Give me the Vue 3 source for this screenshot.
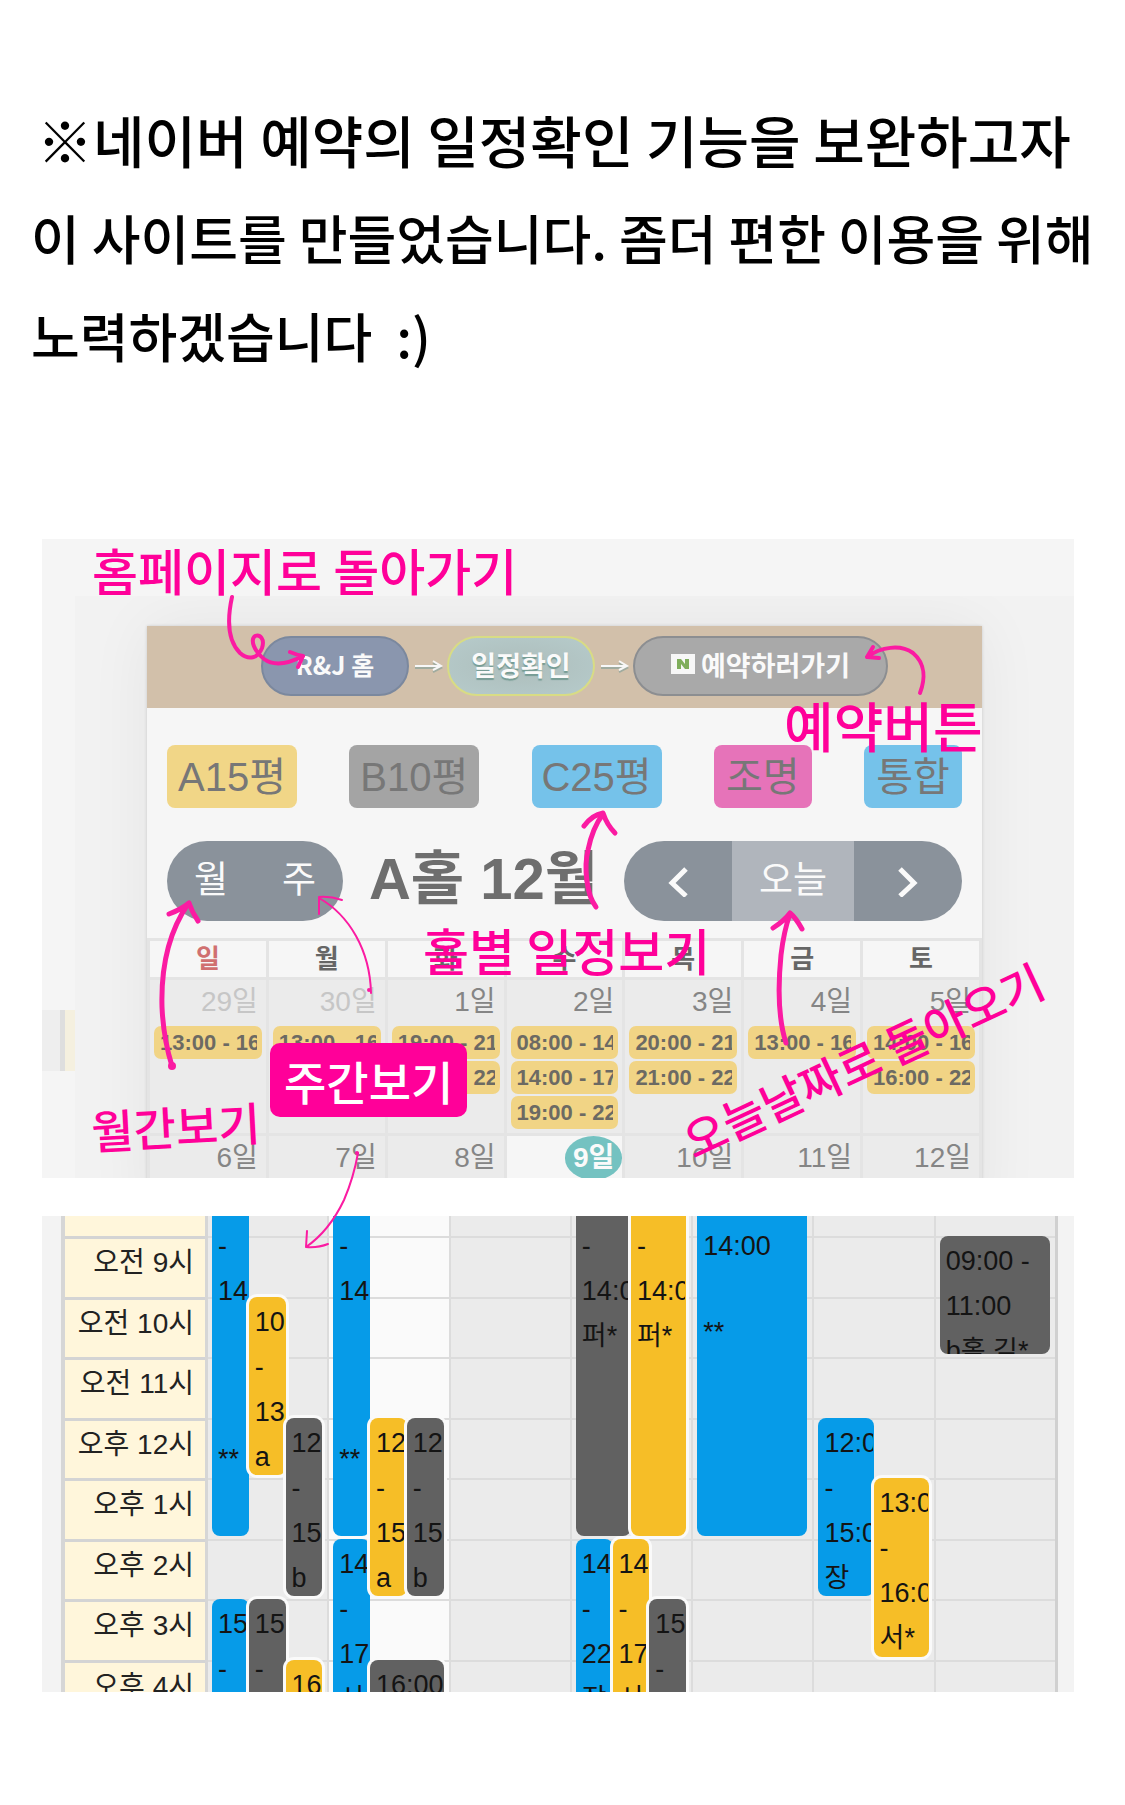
<script setup>
const halls = [
  { name: 'A15평', tone: 'amber', wide: true },
  { name: 'B10평', tone: 'gray', wide: true },
  { name: 'C25평', tone: 'sky', wide: true },
  { name: '조명', tone: 'pink', wide: false },
  { name: '통합', tone: 'sky', wide: false },
]

const weekdays = ['일', '월', '화', '수', '목', '금', '토']

const weeks = [
  [
    { day: 29, faded: true, slots: ['13:00 - 16:00'] },
    { day: 30, faded: true, slots: ['13:00 - 16:00'] },
    { day: 1, slots: ['19:00 - 21:00', '20:00 - 22:00'] },
    { day: 2, slots: ['08:00 - 14:00', '14:00 - 17:00', '19:00 - 22:00'] },
    { day: 3, slots: ['20:00 - 21:00', '21:00 - 22:00'] },
    { day: 4, slots: ['13:00 - 16:00'] },
    { day: 5, slots: ['14:00 - 16:00', '16:00 - 22:00'] },
  ],
  [
    { day: 6, slots: [] },
    { day: 7, slots: [] },
    { day: 8, slots: [] },
    { day: 9, today: true, slots: [] },
    { day: 10, slots: [] },
    { day: 11, slots: [] },
    { day: 12, slots: [] },
  ],
]

const firstHour = 8
const hours = ['오전 8시', '오전 9시', '오전 10시', '오전 11시', '오후 12시', '오후 1시', '오후 2시', '오후 3시', '오후 4시']

const days = [
  {
    events: [
      { from: 8, to: 14, lane: 0, lanes: 3, tone: 'blue', lines: ['08', '-', '14', '', '', '', '**'] },
      { from: 10, to: 13, lane: 1, lanes: 3, tone: 'gold', lines: ['10', '-', '13', 'a'] },
      { from: 12, to: 15, lane: 2, lanes: 3, tone: 'dark', lines: ['12', '-', '15', 'b'] },
      { from: 15, to: 18, lane: 0, lanes: 3, tone: 'blue', lines: ['15', '-'] },
      { from: 15, to: 18, lane: 1, lanes: 3, tone: 'dark', lines: ['15', '-'] },
      { from: 16, to: 18, lane: 2, lanes: 3, tone: 'gold', lines: ['16', '-'] },
    ],
  },
  {
    today: true,
    events: [
      { from: 8, to: 14, lane: 0, lanes: 3, tone: 'blue', lines: ['08', '-', '14', '', '', '', '**'] },
      { from: 14, to: 18, lane: 0, lanes: 3, tone: 'blue', lines: ['14', '-', '17', '서'] },
      { from: 12, to: 15, lane: 1, lanes: 3, tone: 'gold', lines: ['12', '-', '15', 'a'] },
      { from: 12, to: 15, lane: 2, lanes: 3, tone: 'dark', lines: ['12', '-', '15', 'b'] },
      { from: 16, to: 18, lane: 1, lanes: 3, span: 2, tone: 'dark', lines: ['16:00', '-'] },
    ],
  },
  { events: [] },
  {
    events: [
      { from: 8, to: 14, lane: 0, lanes: 2, tone: 'dark', lines: ['08:00', '-', '14:00', '퍼*'] },
      { from: 8, to: 14, lane: 1, lanes: 2, tone: 'gold', lines: ['08:00', '-', '14:00', '퍼*'] },
      { from: 14, to: 22, lane: 0, lanes: 3, tone: 'blue', lines: ['14', '-', '22', '장'] },
      { from: 14, to: 17, lane: 1, lanes: 3, tone: 'gold', lines: ['14', '-', '17', '서'] },
      { from: 15, to: 18, lane: 2, lanes: 3, tone: 'dark', lines: ['15', '-'] },
    ],
  },
  { events: [{ from: 8, to: 14, lane: 0, lanes: 1, tone: 'blue', lines: ['08:00 -', '14:00', '', '**'] }] },
  {
    events: [
      { from: 12, to: 15, lane: 0, lanes: 2, tone: 'blue', lines: ['12:00', '-', '15:00', '장'] },
      { from: 13, to: 16, lane: 1, lanes: 2, tone: 'gold', lines: ['13:00', '-', '16:00', '서*'] },
    ],
  },
  { events: [{ from: 9, to: 11, lane: 0, lanes: 1, tone: 'dark', lines: ['09:00 -', '11:00', 'b홀 김*'] }] },
]

const place = (e) => ({
  top: `${((e.from - firstHour) / hours.length) * 100}%`,
  height: `calc(${((e.to - e.from) / hours.length) * 100}% - 3px)`,
  left: `${(e.lane / e.lanes) * 100}%`,
  width: `${((e.span || 1) / e.lanes) * 100}%`,
})
</script>

<template>
  <main class="page">
    <p class="intro">
      <span class="lead">※네이버 예약의 일정확인 기능을 보완하고자</span>
      <span>이 사이트를 만들었습니다. 좀더 편한 이용을 위해</span>
      <span>노력하겠습니다&nbsp; :)</span>
    </p>

    <div class="guide">
      <section class="month-panel">
        <div class="gutter"><div class="peek"></div></div>
        <div class="backdrop">
          <div class="card">
            <nav class="steps">
              <a href="#" class="step home">R&amp;J 홈</a>
              <svg class="arrow" viewBox="0 0 38 16"><path class="shade" d="M6 10H31M24 5l8 5l-8 4" /><path d="M6 8H31M24 3l8 5l-8 4" /></svg>
              <a href="#" class="step check">일정확인</a>
              <svg class="arrow" viewBox="0 0 38 16"><path class="shade" d="M6 10H31M24 5l8 5l-8 4" /><path d="M6 8H31M24 3l8 5l-8 4" /></svg>
              <a href="#" class="step book">
                <svg class="naver" viewBox="0 0 24 20"><rect width="24" height="20" fill="#f7f7f7" /><path d="M6 5h4l4 5V5h4v10h-4l-4-5v5H6z" fill="#7fae5c" /></svg>
                예약하러가기
              </a>
            </nav>

            <div class="halls">
              <button v-for="h in halls" :key="h.name" type="button" class="hall" :class="[h.tone, { wide: h.wide }]">{{ h.name }}</button>
            </div>

            <div class="toolbar">
              <div class="group views">
                <button type="button">월</button>
                <button type="button">주</button>
              </div>
              <h1>A홀 12월</h1>
              <div class="group pager">
                <button type="button" aria-label="이전"><svg viewBox="0 0 24 32"><path d="M20 4L6 18L20 31" /></svg></button>
                <button type="button" class="now">오늘</button>
                <button type="button" aria-label="다음"><svg viewBox="0 0 24 32"><path d="M4 4L18 18L4 31" /></svg></button>
              </div>
            </div>

            <table class="month">
              <thead>
                <tr><th v-for="(w, i) in weekdays" :key="w" :class="{ sunday: i === 0 }">{{ w }}</th></tr>
              </thead>
              <tbody>
                <tr v-for="(week, i) in weeks" :key="i">
                  <td v-for="d in week" :key="d.day" :class="{ faded: d.faded, today: d.today }">
                    <div class="date"><span>{{ d.day }}일</span></div>
                    <div v-for="s in d.slots" :key="s" class="slot"><span>{{ s }}</span></div>
                  </td>
                </tr>
              </tbody>
            </table>
          </div>
        </div>
      </section>

      <section class="week-panel">
        <div class="week">
          <div class="hours">
            <div v-for="h in hours" :key="h" class="hour">{{ h }}</div>
          </div>
          <div v-for="(d, i) in days" :key="i" class="day" :class="{ today: d.today }">
            <div v-for="h in hours" :key="h" class="cell"></div>
            <div class="lanes">
              <div v-for="(e, j) in d.events" :key="j" class="event" :class="[e.tone, { ring: e.lane > 0 }]" :style="place(e)">
                <div class="clip"><div v-for="(l, k) in e.lines" :key="k" class="line">{{ l }}</div></div>
              </div>
            </div>
          </div>
        </div>
      </section>

      <svg class="arrows" viewBox="42 539 1032 1153" preserveAspectRatio="none">
        <g class="bold">
          <path d="M188 904C166 936 161 972 162 1007C163 1030 167 1050 172 1066M169 914Q182 909 189 903Q192 912 198 921" />
          <path d="M596 907C586 894 584 866 588 850C591 835 597 822 603 814M584 826Q592 815 603 813Q607 825 615 833" />
          <path d="M786 1043C778 1018 778 985 781 955C783 938 786 925 790 914M773 928Q784 921 790 913Q796 918 802 929" />
        </g>
        <g class="medium">
          <path d="M232 597C227 620 228 641 240 653C249 661 258 658 262 648C265 639 260 634 255 636C250 640 254 651 264 659C272 665 284 666 303 656M290 652Q297 655 303 656L298 667" />
          <path d="M920 693C925 680 926 664 913 653C900 644 881 647 867 657M873 647L867 657L879 658" />
        </g>
        <g class="thin">
          <path d="M371 993C370 950 349 915 319 898M342 900Q330 896 319 897V914" />
          <path d="M358 1153C355 1170 350 1186 344 1200C334 1221 322 1236 306 1247M307 1231L306 1247Q318 1248 328 1244" />
        </g>
        <circle cx="172" cy="1066" r="4" />
        <circle cx="369" cy="990" r="2" />
        <circle cx="357" cy="1153" r="2" />
      </svg>

      <span class="note go-home">홈페이지로 돌아가기</span>
      <span class="note reserve">예약버튼</span>
      <span class="note by-hall">홀별 일정보기</span>
      <span class="note monthly">월간보기</span>
      <span class="note weekly">주간보기</span>
      <span class="note back-today">오늘날짜로 돌아오기</span>
    </div>
  </main>
</template>

<style>
body {
  margin: 0;
  background: #fff;
}
</style>

<style scoped>
.page {
  padding: 90px 51px 113px 42px;
  font-family: "Liberation Sans", "Noto Sans CJK KR", sans-serif;
  box-sizing: border-box;
}
button {
  font: inherit;
  border: 0;
  padding: 0;
}
.intro {
  margin: 0 -51px 155px -11px;
  font-family: "Noto Sans CJK KR", sans-serif;
  font-size: 53px;
  font-weight: 500;
  line-height: 98px;
  color: #000;
  white-space: nowrap;
}
.intro span {
  display: block;
}
.intro .lead {
  padding-left: 6px;
  font-size: 56px;
}
.guide {
  position: relative;
  display: flex;
  flex-direction: column;
  gap: 38px;
}

.month-panel {
  display: flex;
  height: 639px;
  overflow: hidden;
  background: #f5f5f5;
}
.gutter {
  flex: 0 0 33px;
  padding-top: 471px;
}
.peek {
  height: 61px;
  box-sizing: border-box;
  background: linear-gradient(90deg, #eee 18px, #dedede 18px, #dedede 23px, #f5f0df 23px);
}
.backdrop {
  flex: 1;
  min-width: 0;
  margin-top: 57px;
  padding: 30px 92px 0 72px;
  background: #f2f2f2;
  overflow: hidden;
}
.card {
  height: 600px;
  background: #f6f6f6;
  box-shadow: 0 0 3px rgba(0, 0, 0, 0.15), 0 0 60px rgba(0, 0, 0, 0.06);
}
.steps {
  display: flex;
  align-items: center;
  justify-content: center;
  box-sizing: border-box;
  height: 82px;
  padding: 0 0 2px 20px;
  background: #d2c0aa;
}
.step {
  display: flex;
  align-items: center;
  justify-content: center;
  gap: 6px;
  box-sizing: border-box;
  width: 148px;
  height: 60px;
  padding-bottom: 4px;
  border: 2px solid;
  border-radius: 30px;
  font-family: "Noto Sans CJK KR", sans-serif;
  font-size: 27px;
  font-weight: 700;
  color: #fafafa;
  text-decoration: none;
  white-space: nowrap;
}
.home {
  background: #8a96ae;
  border-color: #7b889e;
  font-size: 25px;
}
.check {
  background: radial-gradient(#adbdbb, #b6cbcb);
  border-color: #d8dc84;
  text-shadow: 0 2px 1px #769c94;
}
.book {
  width: 255px;
  background: #a9a9a9;
  border-color: #8c8e91;
}
.arrow {
  width: 38px;
  height: 16px;
  fill: none;
  stroke: #f7f7f7;
  stroke-width: 2;
}
.arrow .shade {
  stroke: #a0ab9f;
}
.naver {
  width: 24px;
  height: 20px;
}
.halls {
  display: flex;
  justify-content: space-between;
  padding: 37px 20px 33px;
}
.hall {
  width: 98px;
  height: 63px;
  border-radius: 8px;
  font-size: 40px;
  line-height: 65px;
  color: #777;
  white-space: nowrap;
}
.hall.wide {
  width: 130px;
}
.amber {
  background: #f1d687;
}
.gray {
  background: #a4a4a4;
}
.sky {
  background: #75c2ea;
}
.pink {
  background: #e673b9;
}
.toolbar {
  display: flex;
  align-items: center;
  justify-content: space-between;
  height: 80px;
  padding: 0 20px;
}
.group {
  display: flex;
  height: 80px;
  border-radius: 40px;
  overflow: hidden;
  background: #8a929b;
}
.group button {
  display: flex;
  align-items: center;
  justify-content: center;
  width: 108px;
  background: none;
  color: #fafafa;
  font-size: 37px;
  line-height: 40px;
}
.views button {
  width: 88px;
}
.group .now {
  width: 122px;
  background: #b0b5bc;
}
.group svg {
  width: 24px;
  height: 32px;
  fill: none;
  stroke: #fafafa;
  stroke-width: 5;
}
h1 {
  margin: 0;
  font-size: 58px;
  line-height: 76px;
  height: 80px;
  font-weight: 700;
  color: #6e6e6e;
  white-space: nowrap;
}
.month {
  width: 100%;
  margin-top: 17px;
  table-layout: fixed;
  border-collapse: collapse;
}
.month th,
.month td {
  border: 3px solid #e4e4e4;
  padding: 0;
}
.month th {
  height: 34px;
  font-size: 26px;
  line-height: 36px;
  color: #666;
}
.month th.sunday {
  color: #d07070;
}
.month td {
  height: 153px;
  vertical-align: top;
  background: #ebebeb;
}
.month td.today {
  background: #f6f6f6;
}
.date {
  height: 46px;
  display: flex;
  justify-content: flex-end;
  align-items: flex-start;
  color: #858585;
  font-size: 28px;
  line-height: 44px;
}
.date span {
  padding: 0 8px;
}
.faded .date {
  color: #c6c6c6;
}
.today .date span {
  background: #74c2c1;
  border-radius: 50%;
  color: #fafafa;
  font-weight: 700;
}
.slot {
  height: 33px;
  margin: 0 4px 2px;
  padding: 0 5px 0 6px;
  border-radius: 7px;
  background: #f1d485;
  font-size: 22px;
  line-height: 33px;
  font-weight: 700;
  color: #6c6a63;
}
.slot span {
  display: block;
  overflow: hidden;
  white-space: nowrap;
}

.week-panel {
  height: 476px;
  overflow: hidden;
  padding: 0 16px 0 19px;
  background: #f3f3f3;
}
.week {
  display: flex;
  height: 544px;
  margin-top: -40px;
  border-left: 4px solid #d6d6d6;
  border-right: 3px solid #d0d0d0;
}
.hours {
  display: flex;
  flex-direction: column;
  flex: 0 0 140px;
  border-right: 3px solid #d6d6d6;
  background: #fff6db;
}
.hour {
  flex: 1;
  box-sizing: border-box;
  padding-right: 11px;
  border-top: 3px solid #d4d4d4;
  text-align: right;
  font-size: 28px;
  line-height: 48px;
  color: #222;
  min-height: 0;
}
.day {
  position: relative;
  display: flex;
  flex-direction: column;
  flex: 1;
  box-sizing: border-box;
  min-width: 0;
  background: #ebebeb;
  border-right: 2px solid #dcdcdc;
}
.day:last-child {
  border-right: 0;
}
.day.today {
  background: #fafafa;
}
.cell {
  flex: 1;
  border-top: 2px solid #dcdcdc;
}
.lanes {
  position: absolute;
  inset: 0 5px 0 4px;
}
.event {
  position: absolute;
  box-sizing: border-box;
  padding: 3px 1px 0 6px;
  border-radius: 8px;
  overflow: hidden;
}
.ring {
  box-shadow: 0 0 0 3px #fafafa;
}
.blue {
  background: #069be8;
}
.gold {
  background: #f6be27;
}
.dark {
  background: #616161;
}
.clip {
  overflow: hidden;
}
.line {
  height: 45px;
  font-size: 27px;
  line-height: 45px;
  color: #141414;
  white-space: nowrap;
}
.line:empty {
  height: 41px;
}

.arrows {
  position: absolute;
  inset: 0;
  width: 100%;
  height: 100%;
  pointer-events: none;
  fill: none;
  stroke: #fb1ba2;
  stroke-linecap: round;
  stroke-linejoin: round;
}
.arrows circle {
  fill: #fb1ba2;
  stroke: none;
}
.bold {
  stroke-width: 5;
}
.medium {
  stroke-width: 4;
}
.thin {
  stroke-width: 2;
}
.note {
  position: absolute;
  font-family: "Noto Sans CJK KR", sans-serif;
  font-weight: 500;
  font-size: 50px;
  line-height: 60px;
  color: #ff0099;
  white-space: nowrap;
}
.go-home {
  left: 50px;
  top: 0;
}
.reserve {
  left: 742px;
  top: 156px;
  font-size: 54px;
}
.by-hall {
  left: 381px;
  top: 380px;
}
.monthly {
  left: 49px;
  top: 556px;
  font-size: 46px;
  transform: rotate(-3deg);
}
.weekly {
  left: 228px;
  top: 504px;
  padding: 0 14px;
  border-radius: 10px;
  background: #ff0099;
  color: #fff;
  font-size: 46px;
  line-height: 74px;
}
.back-today {
  left: 625px;
  top: 490px;
  font-size: 46px;
  transform: rotate(-25deg);
}
</style>
